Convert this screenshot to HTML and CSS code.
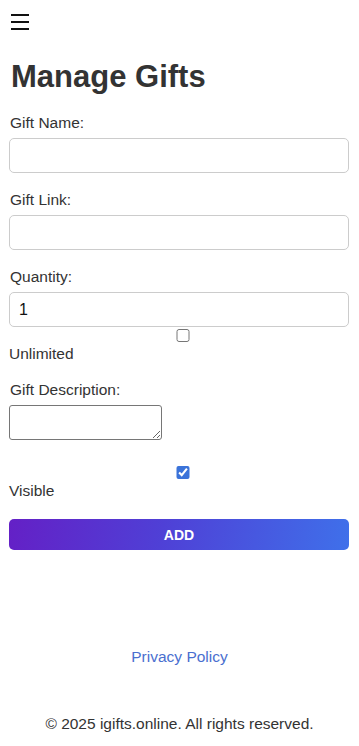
FILE: index.html
```html
<!DOCTYPE html>
<html lang="en">
<head>
    <meta charset="UTF-8">
    <title>Manage Gifts</title>
    <link rel="stylesheet" href="styles.css">
</head>
<body>
    <header class="topbar">
        <button class="menu-btn" aria-label="Menu">
            <svg width="18" height="18" viewBox="0 0 18 18">
                <rect x="0" y="1" width="18" height="2" fill="#111"></rect>
                <rect x="0" y="8" width="18" height="2" fill="#111"></rect>
                <rect x="0" y="15" width="18" height="2" fill="#111"></rect>
            </svg>
        </button>
    </header>

    <main class="container">
        <h1>Manage Gifts</h1>
        <form class="gift-form">
            <div class="form-group">
                <label for="giftName">Gift Name:</label>
                <input type="text" id="giftName">
            </div>
            <div class="form-group">
                <label for="giftLink">Gift Link:</label>
                <input type="text" id="giftLink">
            </div>
            <div class="form-group">
                <label for="quantity">Quantity:</label>
                <input type="number" id="quantity" value="1">
                <input type="checkbox" id="unlimited">
                <label for="unlimited">Unlimited</label>
            </div>
            <div class="form-group desc-group">
                <label for="description">Gift Description:</label>
                <textarea id="description"></textarea>
            </div>
            <div class="form-group">
                <input type="checkbox" id="visible" checked>
                <label for="visible">Visible</label>
            </div>
            <button type="button" class="add-btn">ADD</button>
        </form>
    </main>

    <footer class="footer">
        <a href="#" class="privacy">Privacy Policy</a>
        <p>&copy; 2025 igifts.online. All rights reserved.</p>
    </footer>
</body>
</html>
```

FILE: styles.css
```css
body {
    margin: 0;
    font-family: Arial, "Liberation Sans", sans-serif;
    color: #333;
    background-color: #fff;
}

.topbar {
    padding: 13px 11px 0;
    height: 22px;
}

.menu-btn {
    background: none;
    border: none;
    padding: 0;
    cursor: pointer;
    display: block;
}

.container {
    padding: 0 10px 0 9px;
}

h1 {
    font-size: 31px;
    font-weight: bold;
    margin: 23px 0 0 2px;
    line-height: 37px;
    color: #333;
}

.gift-form {
    margin-top: 19px;
}

.form-group {
    margin-bottom: 18px;
}

.form-group label {
    display: block;
    font-size: 15.5px;
    line-height: 18px;
    margin: 0 0 6px 1px;
}

.form-group input[type="text"],
.form-group input[type="number"] {
    display: block;
    width: 100%;
    box-sizing: border-box;
    height: 35px;
    padding: 6px 9px;
    border: 1px solid #ccc;
    border-radius: 5px;
    font-size: 16px;
    font-family: Arial, "Liberation Sans", sans-serif;
    color: #111;
}

.form-group input[type="checkbox"] {
    display: block;
    width: 100%;
    height: 13px;
    margin: 2px 3px 3px 4px;
    accent-color: #3b73d9;
}

.form-group input[type="checkbox"] + label {
    margin: 0;
}

textarea {
    width: 153px;
    height: 35px;
    box-sizing: border-box;
    border: 1px solid #767676;
    border-radius: 3px;
    margin: 0;
    vertical-align: top;
}

.desc-group {
    margin-bottom: 26px;
}

.add-btn {
    display: block;
    width: 100%;
    height: 31px;
    margin-top: 19px;
    border: none;
    border-radius: 5px;
    background: linear-gradient(100deg, #6420c6 0%, #4f40d6 45%, #3f70ea 100%);
    color: #fff;
    font-weight: bold;
    font-size: 14px;
    font-family: Arial, "Liberation Sans", sans-serif;
    cursor: pointer;
}

.footer {
    text-align: center;
    margin-top: 98px;
}

.privacy {
    display: block;
    color: #4a6fcf;
    text-decoration: none;
    font-size: 15.5px;
    line-height: 18px;
}

.footer p {
    margin: 49px 0 0;
    font-size: 15.5px;
    line-height: 18px;
}
```
